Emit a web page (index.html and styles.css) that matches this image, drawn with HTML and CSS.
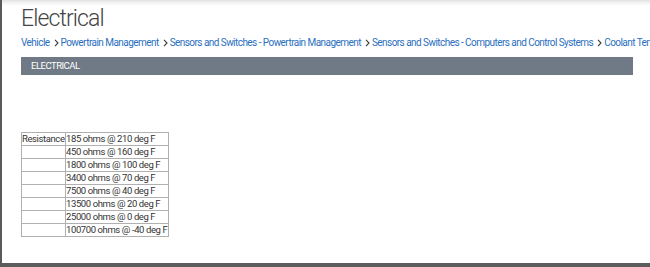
FILE: index.html
```html
<!DOCTYPE html>
<html>
<head>
<meta charset="utf-8">
<link rel="stylesheet" href="styles.css">
</head>
<body>
<div class="frame">
  <div class="page">
    <h1 class="title">Electrical</h1>
    <nav class="crumbs">
      <a>Vehicle</a><svg class="sep" viewBox="0 0 5 8"><path d="M1 0.8 L4 4 L1 7.2" /></svg><a>Powertrain Management</a><svg class="sep" viewBox="0 0 5 8"><path d="M1 0.8 L4 4 L1 7.2" /></svg><a>Sensors and Switches - Powertrain Management</a><svg class="sep" viewBox="0 0 5 8"><path d="M1 0.8 L4 4 L1 7.2" /></svg><a>Sensors and Switches - Computers and Control Systems</a><svg class="sep" viewBox="0 0 5 8"><path d="M1 0.8 L4 4 L1 7.2" /></svg><a>Coolant Temperature Sensor</a>
    </nav>
    <div class="bar">ELECTRICAL</div>
    <table class="spec">
      <tr><td class="label">Resistance</td><td>185 ohms @ 210 deg F</td></tr>
      <tr><td class="label"></td><td>450 ohms @ 160 deg F</td></tr>
      <tr><td class="label"></td><td>1800 ohms @ 100 deg F</td></tr>
      <tr><td class="label"></td><td>3400 ohms @ 70 deg F</td></tr>
      <tr><td class="label"></td><td>7500 ohms @ 40 deg F</td></tr>
      <tr><td class="label"></td><td>13500 ohms @ 20 deg F</td></tr>
      <tr><td class="label"></td><td>25000 ohms @ 0 deg F</td></tr>
      <tr><td class="label"></td><td>100700 ohms @ -40 deg F</td></tr>
    </table>
  </div>
</div>
</body>
</html>
```
FILE: styles.css
```css
html, body {
  margin: 0;
  padding: 0;
  width: 650px;
  height: 267px;
  overflow: hidden;
  background: #ffffff;
}
.frame {
  width: 650px;
  height: 267px;
  box-sizing: border-box;
  border-left: 2px solid #5a5a5a;
  border-bottom: 4px solid #5c5c5c;
  overflow: hidden;
  background: linear-gradient(to bottom, #e2e2e2 0px, #f4f4f4 3px, #ffffff 6px);
}
.page {
  padding: 5px 0 0 19px;
  font-family: Roboto, "Liberation Sans", sans-serif;
}
.title {
  margin: 0;
  font-size: 23px;
  font-weight: 300;
  letter-spacing: -0.9px;
  color: #444444;
  line-height: 28px;
  height: 28px;
}
.crumbs {
  margin-top: 3px;
  font-size: 10px;
  letter-spacing: -0.55px;
  line-height: 13px;
  height: 13px;
  color: #2a6fbe;
  white-space: nowrap;
  overflow: hidden;
}
.crumbs a { color: #2a6fbe; }
.sep {
  display: inline-block;
  width: 5px;
  height: 8px;
  margin: 0 2px 0 4px;
  vertical-align: -0.5px;
}
.sep path {
  fill: none;
  stroke: #3a3a3a;
  stroke-width: 1.1;
}
.bar {
  margin-top: 8px;
  width: 612px;
  height: 18px;
  box-sizing: border-box;
  background: #6f7a86;
  color: #ffffff;
  font-size: 9.5px;
  letter-spacing: -0.5px;
  line-height: 18px;
  padding-left: 10px;
}
.spec {
  margin-top: 57px;
  border-collapse: collapse;
  font-size: 9.5px;
  letter-spacing: -0.4px;
  color: #333;
  border: 1px solid #8a8a8a;
}
.spec td {
  border: 1px solid #b0b0b0;
  padding: 0;
  height: 12px;
  line-height: 12px;
  white-space: nowrap;
}
.spec td.label { width: 43px; }
.spec td:last-child { padding-right: 1px; }
```
